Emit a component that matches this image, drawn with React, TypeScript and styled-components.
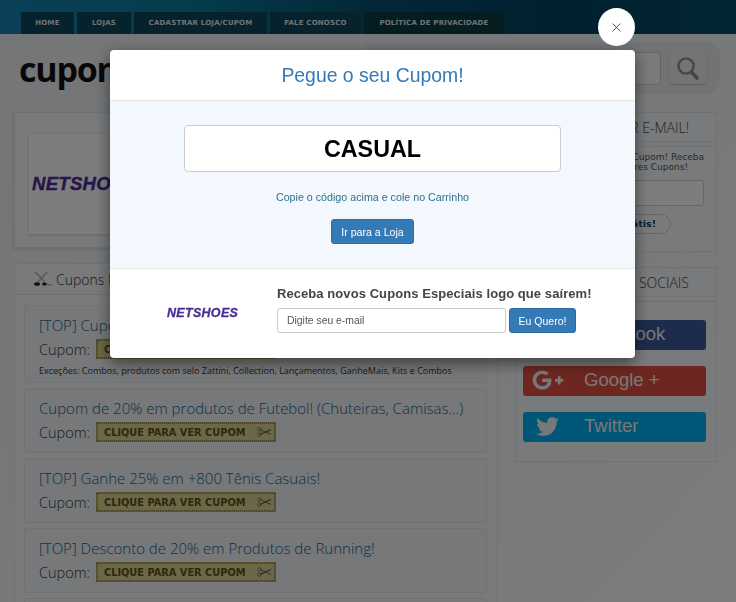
import styled, { createGlobalStyle } from "styled-components";
import { X } from "lucide-react";
import { FaFacebookF, FaGooglePlusG, FaTwitter } from "react-icons/fa";

const GlobalStyle = createGlobalStyle`
    html, body {
        margin: 0;
        height: 100%;
        overflow: hidden;
        background: linear-gradient(135deg, #e8ebee 0%, #f0f2f4 60%, #f8f9fa 100%);
        font-family: "Open Sans", sans-serif;
    }
    * { box-sizing: border-box; }
`

const navItems = [
    { label: "HOME", width: 53 },
    { label: "LOJAS", width: 54 },
    { label: "CADASTRAR LOJA/CUPOM", width: 133 },
    { label: "FALE CONOSCO", width: 91 },
    { label: "POLÍTICA DE PRIVACIDADE", width: 140 },
];

const coupons = [
    { title: "[TOP] Cupom de 20% em Produtos Selecionados!", note: "Exceções: Combos, produtos com selo Zattini, Collection, Lançamentos, GanheMais, Kits e Combos" },
    { title: "Cupom de 20% em produtos de Futebol! (Chuteiras, Camisas...)" },
    { title: "[TOP] Ganhe 25% em +800 Tênis Casuais!" },
    { title: "[TOP] Desconto de 20% em Produtos de Running!" },
    { title: "[TOP] Frete Grátis" },
];

const socials = [
    { label: "Facebook", color: "#3b5998", icon: <FaFacebookF size={24} /> },
    { label: "Google +", color: "#dc4e41", icon: <FaGooglePlusG size={32} /> },
    { label: "Twitter", color: "#00aced", icon: <FaTwitter size={23} /> },
];

const SearchGlyph = () => (
    <svg width="22" height="23" viewBox="0 0 22 23" fill="none" stroke="#8c8c8c">
        <circle cx="9" cy="9" r="7.6" strokeWidth="2.4" />
        <line x1="14.5" y1="15" x2="20" y2="21" strokeWidth="3.6" strokeLinecap="round" />
    </svg>
);

const HeadingGlyph = () => (
    <svg width="20" height="16" viewBox="0 0 20 16">
        <line x1="3" y1="1" x2="13" y2="11" stroke="#b0b0b0" strokeWidth="1.4" />
        <line x1="15" y1="1" x2="6" y2="11" stroke="#b0b0b0" strokeWidth="1.4" />
        <ellipse cx="5" cy="13" rx="3" ry="1.8" fill="#222" />
        <ellipse cx="12.5" cy="13" rx="2.6" ry="1.6" fill="#222" />
        <line x1="14" y1="13.5" x2="20" y2="14" stroke="#999" strokeWidth="1" />
    </svg>
);

const RevealGlyph = () => (
    <svg width="15" height="10" viewBox="0 0 15 10">
        <line x1="3" y1="2.5" x2="14" y2="7.5" stroke="#77775c" strokeWidth="1.2" />
        <line x1="3" y1="7.5" x2="14" y2="2.5" stroke="#55553c" strokeWidth="1.2" />
        <circle cx="2.4" cy="2.4" r="1.7" fill="none" stroke="#77775c" />
        <circle cx="2.4" cy="7.6" r="1.7" fill="none" stroke="#77775c" />
    </svg>
);

export default function App() {
    return (
        <>
            <GlobalStyle />
            <Header>
                <Nav>
                    {navItems.map((item, i) => (
                        <NavTab key={item.label} $width={item.width} $last={i === navItems.length - 1}>{item.label}</NavTab>
                    ))}
                </Nav>
            </Header>
            <TopRow>
                <Logo>cupomvalido</Logo>
                <SearchBox>
                    <SearchInput />
                    <SearchButton><SearchGlyph /></SearchButton>
                </SearchBox>
            </TopRow>
            <Columns>
                <Main>
                    <StorePanel>
                        <StoreLogoCard><StoreLogo>NETSHOES</StoreLogo></StoreLogoCard>
                    </StorePanel>
                    <CouponsPanel>
                        <PanelHeading><HeadingGlyph /> Cupons Netshoes</PanelHeading>
                        <CouponList>
                            {coupons.map(coupon => (
                                <CouponItem key={coupon.title}>
                                    <CouponTitle>{coupon.title}</CouponTitle>
                                    <CouponLine>
                                        Cupom:
                                        <CouponReveal>CLIQUE PARA VER CUPOM <RevealGlyph /></CouponReveal>
                                    </CouponLine>
                                    {coupon.note && <CouponNote>{coupon.note}</CouponNote>}
                                </CouponItem>
                            ))}
                        </CouponList>
                    </CouponsPanel>
                </Main>
                <Side>
                    <SideHeading>RECEBA POR E-MAIL!</SideHeading>
                    <NewsBody>
                        <NewsLine>Não perca nenhum Cupom! Receba</NewsLine>
                        <NewsLine $inset={16}>os melhores Cupons!</NewsLine>
                        <NewsInput />
                        <NewsButton>Assine Grátis!</NewsButton>
                    </NewsBody>
                    <SideHeading $top={15}>REDES SOCIAIS</SideHeading>
                    <SocialBody>
                        {socials.map(social => (
                            <SocialButton key={social.label} $color={social.color}>
                                <SocialIcon>{social.icon}</SocialIcon>
                                {social.label}
                            </SocialButton>
                        ))}
                    </SocialBody>
                </Side>
            </Columns>
            <Overlay />
            <Modal>
                <CloseButton><X size={15} strokeWidth={1.2} color="#222" /></CloseButton>
                <ModalTitle>Pegue o seu Cupom!</ModalTitle>
                <ModalBody>
                    <CodeBox>CASUAL</CodeBox>
                    <CopyHint>Copie o código acima e cole no Carrinho</CopyHint>
                    <StoreButton>Ir para a Loja</StoreButton>
                </ModalBody>
                <ModalFooter>
                    <FooterLogo>NETSHOES</FooterLogo>
                    <FooterForm>
                        <FooterHeading>Receba novos Cupons Especiais logo que saírem!</FooterHeading>
                        <FooterRow>
                            <FooterInput>Digite seu e-mail</FooterInput>
                            <WantButton>Eu Quero!</WantButton>
                        </FooterRow>
                    </FooterForm>
                </ModalFooter>
            </Modal>
        </>
    );
}

const Header = styled.header`
    height: 34px;
    padding: 12px 0 0 21px;
    background: linear-gradient(90deg, #1580b0 0%, #0a7a98 25%, #045070 50%, #03405f 75%, #044a68 100%);
`
const Nav = styled.nav`
    display: flex;
    gap: 3px;
`
const NavTab = styled.a<{ $width: number; $last?: boolean }>`
    width: ${p => p.$width}px;
    height: 22px;
    display: flex;
    align-items: center;
    justify-content: center;
    background: ${p => (p.$last ? "#0a3840" : "#0d4458")};
    color: #dde4e8;
    font: bold 7px "DejaVu Sans", sans-serif;
    letter-spacing: 0.2px;
`
const TopRow = styled.div`
    height: 78px;
    display: flex;
    justify-content: space-between;
    padding: 8px 16px 0 19px;
`
const Logo = styled.div`
    font: bold 34px/54px "Open Sans", sans-serif;
    color: #111;
    letter-spacing: -1.2px;
`
const SearchBox = styled.div`
    width: 360px;
    height: 52px;
    display: flex;
    align-items: center;
    justify-content: flex-end;
    gap: 8px;
    padding-right: 13px;
    background: #e4e6e8;
    border-radius: 14px;
`
const SearchInput = styled.div`
    width: 200px;
    height: 33px;
    background: #f4f4f4;
    border: 1px solid #ccc;
    border-radius: 3px;
`
const SearchButton = styled.div`
    width: 38px;
    height: 32px;
    display: flex;
    align-items: center;
    justify-content: center;
    background: #e8e8e8;
    border-radius: 5px;
    box-shadow: 0 1px 2px #bbb;
`
const Columns = styled.div`
    display: flex;
    padding: 0 19px 0 14px;
    gap: 17px;
`
const Main = styled.main`
    width: 484px;
`
const StorePanel = styled.section`
    height: 136px;
    padding: 21px 14px 0;
    background: #f2f4f6;
    border: 1px solid #dfe2e4;
    box-shadow: 0 1px 3px #ccc;
`
const StoreLogoCard = styled.div`
    width: 200px;
    height: 100px;
    display: flex;
    align-items: center;
    padding-left: 3px;
    background: #fafafa;
    box-shadow: 0 1px 3px #ccc;
`
const StoreLogo = styled.div`
    color: #4a2d96;
    font: italic 900 18.5px "Liberation Sans", sans-serif;
    letter-spacing: 0.3px;
    -webkit-text-stroke: 0.4px #4a2d96;
`
const CouponsPanel = styled.section`
    margin-top: 15px;
    background: #f2f4f6;
    border: 1px solid #dfe2e4;
`
const PanelHeading = styled.h3`
    height: 31px;
    margin: 0;
    display: flex;
    align-items: center;
    gap: 4px;
    padding-left: 17px;
    border-bottom: 1px solid #dfe2e4;
    font: 300 14px "Open Sans", sans-serif;
    color: #333;
`
const CouponList = styled.div`
    display: flex;
    flex-direction: column;
    gap: 5px;
    padding: 10px 10px 0 9px;
`
const CouponItem = styled.article`
    padding: 8px 14px 5px;
    min-height: 65px;
    background: #edf0f2;
    border: 1px solid #dfe2e4;
    border-radius: 3px;
`
const CouponTitle = styled.div`
    color: #1a5f8f;
    font: 300 15px/22px "Open Sans", sans-serif;
    white-space: nowrap;
`
const CouponLine = styled.div`
    display: flex;
    align-items: center;
    gap: 7px;
    margin-top: 4px;
    color: #333;
    font: 300 14.5px/20px "Open Sans", sans-serif;
`
const CouponReveal = styled.span`
    width: 178px;
    height: 18px;
    margin-top: -2px;
    display: flex;
    align-items: center;
    justify-content: space-between;
    padding: 0 2px 0 6px;
    background: #d8cf90;
    border: 1px dotted #77703a;
    outline: 1px solid #b0a258;
    color: #5a5210;
    font: bold 9.8px "DejaVu Sans", sans-serif;
    white-space: nowrap;
`
const CouponNote = styled.div`
    margin-top: 4px;
    color: #333;
    font: 9px/13px "Open Sans", sans-serif;
    white-space: nowrap;
`
const Side = styled.aside`
    width: 202px;
`
const SideHeading = styled.h3<{ $top?: number }>`
    height: 30px;
    margin: ${p => p.$top ?? 0}px 0 4px;
    display: flex;
    align-items: center;
    justify-content: flex-end;
    padding-right: 27px;
    background: #f2f4f6;
    border: 1px solid #dfe2e4;
    color: #444;
    font: 300 14px "Open Sans", sans-serif;
`
const NewsBody = styled.div`
    height: 106px;
    padding: 5px 12px 0 8px;
    background: #f2f4f6;
    border: 1px solid #dfe2e4;
`
const NewsLine = styled.div<{ $inset?: number }>`
    padding-right: ${p => p.$inset ?? 0}px;
    color: #555;
    font: 9px/10px "DejaVu Sans", sans-serif;
    text-align: right;
    white-space: nowrap;
`
const NewsInput = styled.div`
    height: 26px;
    margin-top: 8px;
    background: #fafafa;
    border: 1px solid #ccc;
    border-radius: 3px;
`
const NewsButton = styled.div`
    width: 110px;
    height: 20px;
    margin: 8px 33px 0 auto;
    padding-right: 14px;
    text-align: right;
    color: #0c3f70;
    background: #f4f4f4;
    border: 1px solid #ccc;
    border-radius: 10px;
    font: bold 9.5px/18px "DejaVu Sans", sans-serif;
    white-space: nowrap;
`
const SocialBody = styled.div`
    height: 161px;
    display: flex;
    flex-direction: column;
    gap: 16px;
    padding: 18px 10px 0 7px;
    background: #f2f4f6;
    border: 1px solid #dfe2e4;
`
const SocialButton = styled.a<{ $color: string }>`
    height: 30px;
    display: flex;
    align-items: center;
    padding-bottom: 2px;
    border-radius: 3px;
    background: ${p => p.$color};
    color: #f0f0f0;
    font: 18.5px "Liberation Sans", sans-serif;
`
const SocialIcon = styled.span`
    width: 61px;
    display: flex;
    justify-content: center;
    padding-right: 12px;
`
const Overlay = styled.div`
    position: fixed;
    inset: 0;
    background: rgba(0, 0, 0, 0.5);
`
const Modal = styled.div`
    position: fixed;
    left: 110px;
    top: 50px;
    width: 525px;
    height: 308px;
    background: #fff;
    border-radius: 4px;
    box-shadow: 0 5px 15px rgba(0, 0, 0, 0.5);
    font-family: "Liberation Sans", sans-serif;
`
const CloseButton = styled.div`
    position: absolute;
    top: -42px;
    right: 0;
    width: 37px;
    height: 38px;
    display: flex;
    align-items: center;
    justify-content: center;
    background: #fff;
    border-radius: 50%;
`
const ModalTitle = styled.h4`
    height: 51px;
    margin: 0;
    border-bottom: 1px solid #e5e5e5;
    color: #337ab7;
    font: 19.4px/51px "Liberation Sans", sans-serif;
    text-align: center;
`
const ModalBody = styled.div`
    height: 168px;
    display: flex;
    flex-direction: column;
    align-items: center;
    padding-top: 24px;
    background: #f2f8fd;
    border-bottom: 1px solid #e5e5e5;
`
const CodeBox = styled.div`
    width: 377px;
    height: 47px;
    background: #fff;
    border: 1px solid #ccc;
    border-radius: 4px;
    color: #000;
    font: bold 23.3px/47px "Liberation Sans", sans-serif;
    text-align: center;
`
const CopyHint = styled.p`
    margin: 18px 0 0;
    color: #31708f;
    font-size: 10.7px;
    line-height: 14px;
`
const StoreButton = styled.button`
    width: 83px;
    height: 25px;
    margin-top: 15px;
    padding: 0;
    background: #337ab7;
    border: 1px solid #2e6da4;
    border-radius: 3px;
    color: #fff;
    font: 10.6px "Liberation Sans", sans-serif;
`
const ModalFooter = styled.div`
    display: flex;
    padding: 17px 0 0 57px;
`
const FooterLogo = styled.div`
    width: 110px;
    padding-top: 20px;
    color: #4a2d96;
    font: italic 900 12.5px "Liberation Sans", sans-serif;
    letter-spacing: 0.3px;
    -webkit-text-stroke: 0.3px #4a2d96;
`
const FooterForm = styled.div`
    display: flex;
    flex-direction: column;
`
const FooterHeading = styled.h5`
    margin: 0 0 6px;
    color: #444;
    font: bold 13px/16px "Liberation Sans", sans-serif;
    letter-spacing: 0.07px;
    white-space: nowrap;
`
const FooterRow = styled.div`
    display: flex;
    gap: 3px;
`
const FooterInput = styled.div`
    width: 229px;
    height: 25px;
    padding-left: 9px;
    background: #fff;
    border: 1px solid #ccc;
    border-radius: 3px;
    color: #555;
    font-size: 10.4px;
    line-height: 23px;
`
const WantButton = styled.button`
    width: 67px;
    height: 25px;
    padding: 0;
    background: #337ab7;
    border: 1px solid #2e6da4;
    border-radius: 3px;
    color: #fff;
    font: 10.5px "Liberation Sans", sans-serif;
`
